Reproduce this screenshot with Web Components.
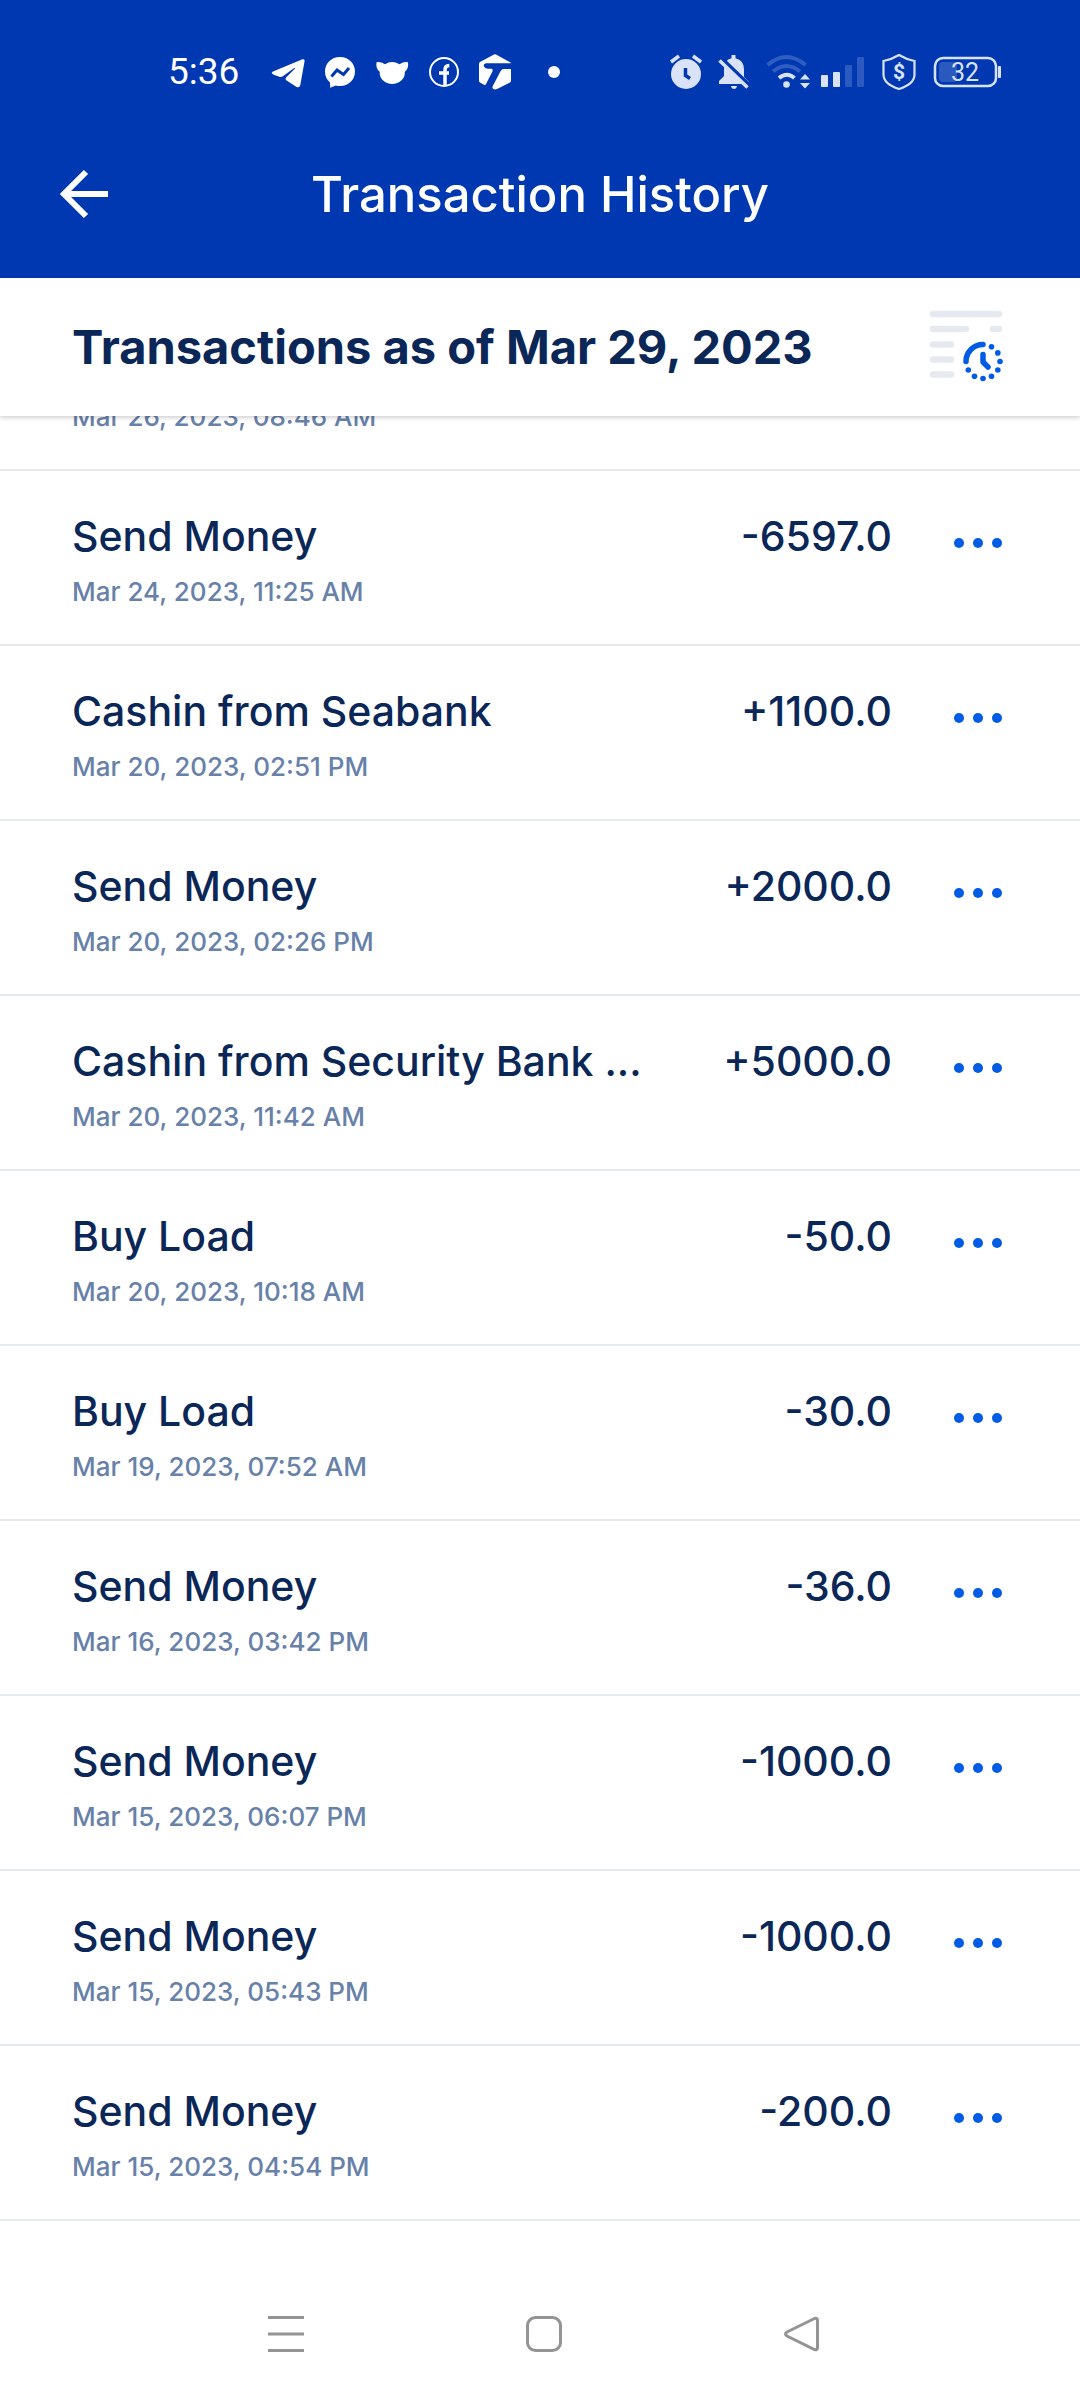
<!DOCTYPE html>
<html lang="en">
<head>
<meta charset="utf-8">
<meta name="viewport" content="width=device-width, initial-scale=1">
<title>Transaction History</title>
<style>
  html, body { margin: 0; height: 100%; }
  body {
    --brand: #0038b2;
    --ink: #0a2757;
    --muted: #6781a9;
    --line: #e5eaf0;
    --accent: #005ce5;
    --left: 72px;
    --right: 78px;
    background: #fff;
    color: var(--ink);
    font-family: Inter, "Noto Sans", sans-serif;
  }
</style>
</head>
<body>
<history-app>
  <status-bar slot="top" time="5:36" battery="32"></status-bar>
  <app-bar slot="top">Transaction History</app-bar>
  <list-heading slot="top">Transactions as of Mar 29, 2023</list-heading>
  <transaction-row when="Mar 26, 2023, 08:46 AM" partial></transaction-row>
  <transaction-row amount="-6597.0" when="Mar 24, 2023, 11:25 AM">Send Money</transaction-row>
  <transaction-row amount="+1100.0" when="Mar 20, 2023, 02:51 PM">Cashin from Seabank</transaction-row>
  <transaction-row amount="+2000.0" when="Mar 20, 2023, 02:26 PM">Send Money</transaction-row>
  <transaction-row amount="+5000.0" when="Mar 20, 2023, 11:42 AM">Cashin from Security Bank ...</transaction-row>
  <transaction-row amount="-50.0" when="Mar 20, 2023, 10:18 AM">Buy Load</transaction-row>
  <transaction-row amount="-30.0" when="Mar 19, 2023, 07:52 AM">Buy Load</transaction-row>
  <transaction-row amount="-36.0" when="Mar 16, 2023, 03:42 PM">Send Money</transaction-row>
  <transaction-row amount="-1000.0" when="Mar 15, 2023, 06:07 PM">Send Money</transaction-row>
  <transaction-row amount="-1000.0" when="Mar 15, 2023, 05:43 PM">Send Money</transaction-row>
  <transaction-row amount="-200.0" when="Mar 15, 2023, 04:54 PM">Send Money</transaction-row>
  <system-nav slot="bottom"></system-nav>
</history-app>

<script>
const reset = `
  :host, * { box-sizing: border-box; }
  button { display: flex; margin: 0; padding: 0; border: 0; background: none; color: inherit; cursor: pointer; }
  svg { display: block; flex: none; overflow: visible; }
`;
const render = (host, html) => {
  host.attachShadow({ mode: 'open' }).innerHTML = html;
};

customElements.define('history-app', class extends HTMLElement {
  connectedCallback() {
    render(this, `<style>${reset}
      :host { display: flex; flex-direction: column; min-height: 100vh; }
      header { position: relative; z-index: 1; box-shadow: 0 1px 5px rgba(0,0,0,.24); }
      main { flex: 1; overflow: hidden; }
    </style>
    <header><slot name="top"></slot></header>
    <main role="list"><slot></slot></main>
    <slot name="bottom"></slot>`);
  }
});

customElements.define('status-bar', class extends HTMLElement {
  connectedCallback() {
    render(this, `<style>${reset}
      :host { display: flex; justify-content: space-between; align-items: center; height: 112px;
        padding: 32px var(--right) 0 168px; background: var(--brand); color: #fff; font-family: Roboto, sans-serif; }
      .left, .right { display: flex; align-items: center; }
      .left { gap: 20px; }
      .right { gap: 16px; color: #d9e2f7; }
      time { padding-right: 12px; font-size: 37px; line-height: 40px; }
      text { font-family: Roboto, sans-serif; }
    </style>
    <div class="left">
      <time>${this.getAttribute('time')}</time>
      <svg width="34" height="36" viewBox="272 54 34 36" fill="#fff"><path d="M303.500 59.300 274 71.600q-2.600 1.400.200 2.800l6 2.400q2 .600 3.600-.500l11.500-8.300q1.500-.700.500.700l-8.500 8.600q-1.700 2 .300 3.300l10 6.300q2.900 1.500 3.700-1.800l4.300-24q.2-2.500-2.100-1.800z"/></svg>
      <svg width="30" height="36" viewBox="326 54 30 36"><path fill="#fff" d="M341 57c-8.600 0-15 6.200-15 14.500 0 4.600 1.800 8.200 5 10.900l.2 5.400 5.600-2.300c1.300.4 2.700.5 4.200.5 8.600 0 15-6.200 15-14.500S349.600 57 341 57z"/><path d="m332.500 76.500 5.500-6.500 6.500 4.500 5.500-6.500" fill="none" stroke="#0038b2" stroke-width="3"/></svg>
      <svg width="34" height="36" viewBox="376 54 34 36" fill="#fff"><path d="M377.500 62.200q4.500-.6 8.500 2Q393 60 400.500 64.200q4-2.600 8.500-2 1 6-3.200 9.600C406.500 79 400 84 393.200 84S380 79 380.700 71.800q-4.200-3.600-3.200-9.600z"/></svg>
      <svg width="30" height="36" viewBox="430 54 30 36" fill="none" stroke="#fff"><circle cx="445" cy="72" r="14" stroke-width="2"/><path d="M446 86V70q0-4.500 4.300-4.500M440 73h10" stroke-width="3.500"/></svg>
      <svg width="32" height="36" viewBox="481 54 32 36" fill="#fff"><path d="M496 54.500q1-.500 2 0L512.500 62.500q.5.800 0 .800H488q-3 .500-2 3.200 1 2.300 4 2.300h3.500q1.800.7.800 3L488 84q-.800 1.500-2.500.500l-3.500-2q-1-.600-1-2V64q0-1.500 1-2z"/><path d="M513 69v11.500q0 1.500-1 2L499 89q-2 1-4-.300-1-1.200-.300-2.500l7.800-15q1.200-2.200 3.500-2.200z"/></svg>
      <svg width="46" height="36"><circle cx="23" cy="18" r="6" fill="#fff"/></svg>
    </div>
    <div class="right">
      <svg width="32" height="36" viewBox="670 54 32 36"><circle cx="686" cy="74" r="15" fill="currentColor"/><path d="m671 62 8-6M701 62l-8-6" stroke="currentColor" stroke-width="3.500"/><path d="M685.500 68v7.500l4.500 3" fill="none" stroke="#0038b2" stroke-width="3.500"/></svg>
      <svg width="32" height="36" viewBox="718 54 32 36"><path fill="currentColor" d="M731.500 55h4v3.200q8.500 2 8.500 11V77l5 5v2h-30v-3l5-5v-7q0-9 7.500-10.800zM731 86h6q-.500 3-3 3t-3-3z"/><path d="m721.500 58.500 28 27" stroke="#0038b2" stroke-width="4"/><path d="m719.500 60.500 28 27" stroke="currentColor" stroke-width="3.500"/></svg>
      <svg width="98" height="36" viewBox="766 54 98 36"><g fill="none" stroke="currentColor" stroke-width="4"><path d="M767.500 65q19-16 38 0M773 71.500q13.500-11 27 0" opacity=".22"/><path d="M779 78q8-6.500 15.500 0"/></g><circle cx="786.500" cy="84.500" r="3.300" fill="currentColor"/><path fill="currentColor" d="m805 74 5 5.500h-10zM805 88.500l5-5.500h-10z"/><g fill="currentColor"><rect x="821" y="75" width="7" height="12" rx="1"/><rect x="833" y="72" width="7" height="15" rx="1"/><g opacity=".2"><rect x="845" y="65" width="7" height="22" rx="1"/><rect x="857" y="57" width="7" height="30" rx="1"/></g></g></svg>
      <svg width="37" height="36" viewBox="880 54 37 36"><path d="M899 55q7.500 4.500 15.500 6v13.500q0 9.500-15.500 14.500-15.500-5-15.500-14.500V61q8-1.500 15.500-6z" fill="none" stroke="currentColor" stroke-width="2.200"/><text x="899" y="79" font-size="21" font-weight="700" text-anchor="middle" fill="currentColor">$</text></svg>
      <svg width="69" height="36" viewBox="933 54 69 36"><rect x="935" y="58" width="61" height="28" rx="8" fill="none" stroke="currentColor" stroke-width="2.500"/><rect x="939" y="62" width="18" height="20" rx="4" fill="currentColor" opacity=".2"/><rect x="998" y="66" width="3" height="12" rx="1" fill="currentColor"/><text x="965" y="81" font-size="25" text-anchor="middle" fill="currentColor">${this.getAttribute('battery')}</text></svg>
    </div>`);
  }
});

customElements.define('app-bar', class extends HTMLElement {
  connectedCallback() {
    render(this, `<style>${reset}
      :host { display: grid; grid-template-columns: 1fr auto 1fr; align-items: center; height: 166px;
        padding: 0 60px; background: var(--brand); color: #fff; }
      button { justify-self: start; }
      h1 { margin: 0; font-size: 49px; line-height: 56px; font-weight: 500; }
    </style>
    <button type="button" aria-label="Back"><svg width="48" height="52" viewBox="0 0 48 52" fill="none" stroke="#fff" stroke-width="6"><path d="M26 3 4 25l22 22M4 25h44"/></svg></button>
    <h1><slot></slot></h1>`);
  }
});

customElements.define('list-heading', class extends HTMLElement {
  connectedCallback() {
    const dots = [[991.5,346.7],[997.8,352.9],[1000,361.5],[997.8,370],[991.5,376.3],[983,378.5],[974.5,376.3],[968.3,370]]
      .map(([x, y]) => `<circle cx="${x}" cy="${y}" r="2.800"/>`).join('');
    render(this, `<style>${reset}
      :host { display: flex; justify-content: space-between; align-items: center; height: 138px;
        padding: 0 76px 0 var(--left); background: #fff; }
      h2 { margin: 0; font-size: 47px; line-height: 56px; font-weight: 700; }
    </style>
    <h2><slot></slot></h2>
    <button type="button" aria-label="Request history"><svg width="74" height="72" viewBox="930 311 74 72" fill="none" stroke-linecap="round" stroke-linejoin="round">
      <path d="M933 314h66M933 329h33M993 329h6M933 344.500h18M933 359.500h18M933 374.500h18" stroke="#e6e9ef" stroke-width="6.500"/>
      <path d="M966 361.500a17 17 0 0 1 17-17M983 354.500v7.500l5 5" stroke="#005ce5" stroke-width="5.500"/>
      <g fill="#005ce5">${dots}</g></svg></button>`);
  }
});

customElements.define('transaction-row', class extends HTMLElement {
  connectedCallback() {
    this.setAttribute('role', 'listitem');
    const full = !this.hasAttribute('partial');
    render(this, `<style>${reset}
      :host { display: flex; height: 175px; padding: 45px var(--right) 0 var(--left); border-bottom: 2px solid var(--line); }
      :host([partial]) { margin-top: -120px; }
      .info { flex: 1; min-width: 0; display: flex; flex-direction: column; gap: 21px; }
      .name { height: 40px; white-space: nowrap; }
      .name, .amount { font-size: 41px; line-height: 40px; font-weight: 500; }
      .amount { margin-right: 62px; }
      .when { color: var(--muted); font-size: 26px; line-height: 30px; font-weight: 500; }
      button { align-self: flex-start; padding: 22px 0; }
    </style>
    <div class="info"><div class="name"><slot></slot></div><time class="when">${this.getAttribute('when')}</time></div>
    ${full ? `<div class="amount">${this.getAttribute('amount')}</div>
    <button type="button" aria-label="More options"><svg width="48" height="10" fill="#005ce5"><circle cx="5" cy="5" r="5"/><circle cx="24" cy="5" r="5"/><circle cx="43" cy="5" r="5"/></svg></button>` : ''}`);
  }
});

customElements.define('system-nav', class extends HTMLElement {
  connectedCallback() {
    render(this, `<style>${reset}
      :host { display: flex; justify-content: center; align-items: center; gap: 222px; height: 132px; padding-left: 8px; background: #fff; }
      svg { fill: none; stroke: #949494; stroke-width: 3; }
    </style>
    <button type="button" aria-label="Recent apps"><svg width="36" height="36"><path d="M0 1.500h36M0 18h36M0 34.500h36"/></svg></button>
    <button type="button" aria-label="Home"><svg width="36" height="36"><rect x="1.500" y="1.500" width="33" height="33" rx="8"/></svg></button>
    <button type="button" aria-label="Back"><svg width="36" height="36"><path d="M30.500 2.500 3 16q-3 2 0 4l27.500 13.500q3 1 3-2V4.500q0-3-3-2z"/></svg></button>`);
  }
});
</script>
</body>
</html>
